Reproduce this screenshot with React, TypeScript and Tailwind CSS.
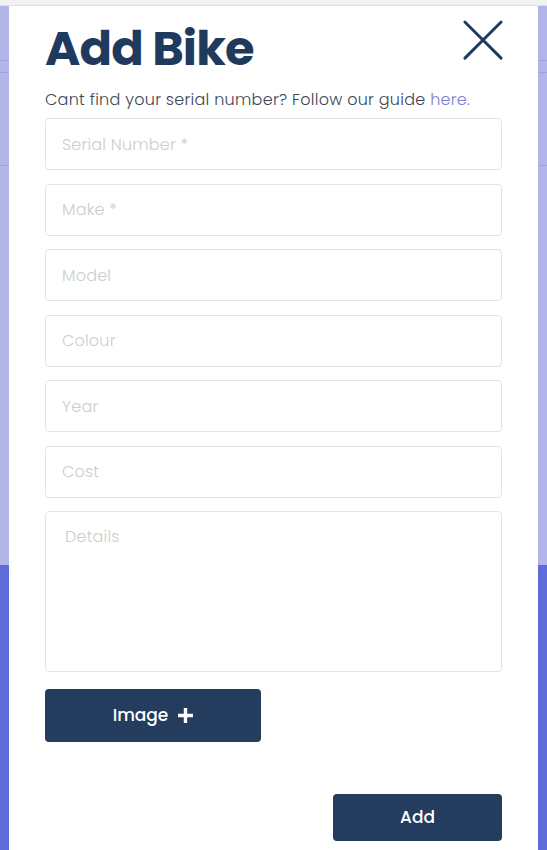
import React from "react";

const fields = ["Serial Number *", "Make *", "Model", "Colour", "Year", "Cost"];

export default function App() {
  return (
    <div
      className="relative w-[547px] h-[850px] overflow-hidden bg-[#b1b5ea]"
      style={{ fontFamily: "Poppins, 'Open Sans', sans-serif" }}
    >
      {/* background page */}
      <div className="flex flex-col h-full">
        <div className="h-[6px] bg-[#f2f2f2] border-b border-[#dedede]" />
        <div className="h-[54px]" />
        <div className="h-[1px] bg-[#9ea3dc]" />
        <div className="h-[11px]" />
        <div className="h-[1px] bg-[#9ea3dc]" />
        <div className="h-[92px]" />
        <div className="h-[1px] bg-[#9ea3dc]" />
        <div className="flex-1" />
        <div className="h-[285px] bg-[#5f6bd8]" />
      </div>

      {/* modal */}
      <div className="absolute left-[9px] top-[6px] bottom-0 w-[529px] bg-white px-[36px]">
        <div className="flex justify-between items-start pt-[14px]">
          <h1 className="text-[48px] leading-[58px] font-bold text-[#1f3a5f] tracking-[-0.9px]">
            Add Bike
          </h1>
          <button className="mr-[-1px] w-[40px] h-[40px] flex items-center justify-center">
            <svg width="42" height="41" viewBox="0 0 42 41">
              <path
                d="M2 1 L40 39 M40 1 L2 39"
                stroke="#1f3a5f"
                strokeWidth="3"
                strokeLinecap="round"
              />
            </svg>
          </button>
        </div>
        <p className="mt-[11px] text-[16px] leading-[22px] font-light tracking-[0.27px] text-[#3a4656]">
          Cant find your serial number? Follow our guide{" "}
          <span className="text-[#7b80d2]">here.</span>
        </p>
        <div className="mt-[7px] flex flex-col gap-[13.5px]">
          {fields.map((f) => (
            <input
              key={f}
              placeholder={f}
              className="h-[52px] w-full rounded-[4px] border border-[#e4e4e4] px-[16px] text-[16px] font-light tracking-[0.2px] outline-none placeholder:text-[#cdcdcd]"
            />
          ))}
          <textarea
            placeholder="Details"
            className="h-[161px] w-full resize-none rounded-[4px] border border-[#e4e4e4] px-[19px] py-[13px] text-[16px] font-light tracking-[0.2px] outline-none placeholder:text-[#cdcdcd]"
          />
        </div>
        <button className="mt-[17px] w-[216px] h-[53px] rounded-[4px] bg-[#243d5f] text-white text-[17px] font-medium flex items-center justify-center gap-[10px]">
          <span>Image</span>
          <svg width="15" height="15" viewBox="0 0 15 15">
            <path d="M7.5 0 V15 M0 7.5 H15" stroke="white" strokeWidth="3.4" />
          </svg>
        </button>
        <div className="mt-[52px] flex justify-end">
          <button className="w-[169px] h-[47px] rounded-[4px] bg-[#243d5f] text-white text-[17px] font-medium">
            Add
          </button>
        </div>
      </div>
    </div>
  );
}
